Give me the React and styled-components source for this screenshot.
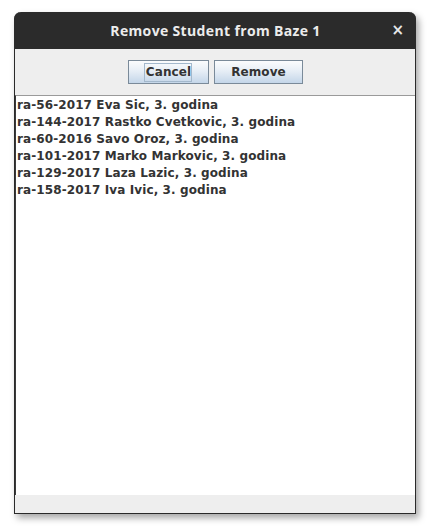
import React from "react";
import styled, { createGlobalStyle } from "styled-components";

const Global = createGlobalStyle`
  html, body { margin: 0; padding: 0; background: #ffffff; }
  #root { width: 434px; height: 532px; }
`;

const Page = styled.div`
  width: 434px;
  height: 532px;
  box-sizing: border-box;
  padding: 12px 0 0 14px;
`;

const Window = styled.div`
  width: 402px;
  height: 502px;
  box-sizing: border-box;
  display: flex;
  flex-direction: column;
  background: #eeeeee;
  border: 1px solid #2a2a2a;
  border-top: none;
  border-radius: 7px 7px 0 0;
  box-shadow: 3px 4px 7px rgba(0, 0, 0, 0.35);
`;

const TitleBar = styled.div`
  height: 37px;
  margin: 0 -1px;
  flex: none;
  display: flex;
  align-items: center;
  justify-content: center;
  position: relative;
  background: #2b2b2b;
  border-radius: 7px 7px 0 0;
  color: #ececec;
  font-family: "Open Sans", "DejaVu Sans", sans-serif;
  font-weight: 700;
  font-size: 14px;
  letter-spacing: 0.35px;
  padding-left: 1px;
`;

const Close = styled.span`
  position: absolute;
  right: 12px;
  top: 9px;
  font-family: "DejaVu Sans", sans-serif;
  font-size: 15px;
  font-weight: 700;
  letter-spacing: 0;
  color: #e8e8e8;
`;

const ButtonRow = styled.div`
  height: 46px;
  flex: none;
  display: flex;
  justify-content: center;
  align-items: center;
  gap: 5px;
  box-sizing: border-box;
`;

const Button = styled.button`
  width: ${(p) => p.$w}px;
  height: 24px;
  box-sizing: border-box;
  border: 1px solid #7a8a99;
  background: linear-gradient(#fbfcfd 0%, #e7eef6 45%, #c4d6e9 100%);
  font-family: "DejaVu Sans", sans-serif;
  font-weight: 700;
  font-size: 12px;
  letter-spacing: 0.1px;
  color: #333333;
  padding: 1px 0 0 0;
  display: flex;
  align-items: center;
  justify-content: center;
  cursor: default;
`;

const Focus = styled.span`
  padding: 1px 0px 1px 1px;
  border: 1px solid ${(p) => (p.$on ? "#a3b8cc" : "transparent")};
  line-height: 15px;
`;

const List = styled.div`
  flex: 1;
  background: #ffffff;
  border-top: 1px solid #9a9a9a;
  border-left: 1px solid #3a3a3a;
  padding: 1px 0 0 1px;
  font-family: "DejaVu Sans", sans-serif;
  font-weight: 700;
  font-size: 12px;
  letter-spacing: 0.1px;
  color: #333333;
`;

const Row = styled.div`
  height: 17px;
  line-height: 17px;
  white-space: nowrap;
`;

const Footer = styled.div`
  height: 18px;
  flex: none;
  background: #eeeeee;
`;

const students = [
  "ra-56-2017 Eva Sic, 3. godina",
  "ra-144-2017 Rastko Cvetkovic, 3. godina",
  "ra-60-2016 Savo Oroz, 3. godina",
  "ra-101-2017 Marko Markovic, 3. godina",
  "ra-129-2017 Laza Lazic, 3. godina",
  "ra-158-2017 Iva Ivic, 3. godina",
];

export default function App() {
  return (
    <Page>
      <Global />
      <Window>
        <TitleBar>
          Remove Student from Baze 1
          <Close>×</Close>
        </TitleBar>
        <ButtonRow>
          <Button $w={81}>
            <Focus $on>Cancel</Focus>
          </Button>
          <Button $w={89}>
            <Focus>Remove</Focus>
          </Button>
        </ButtonRow>
        <List>
          {students.map((s) => (
            <Row key={s}>{s}</Row>
          ))}
        </List>
        <Footer />
      </Window>
    </Page>
  );
}
